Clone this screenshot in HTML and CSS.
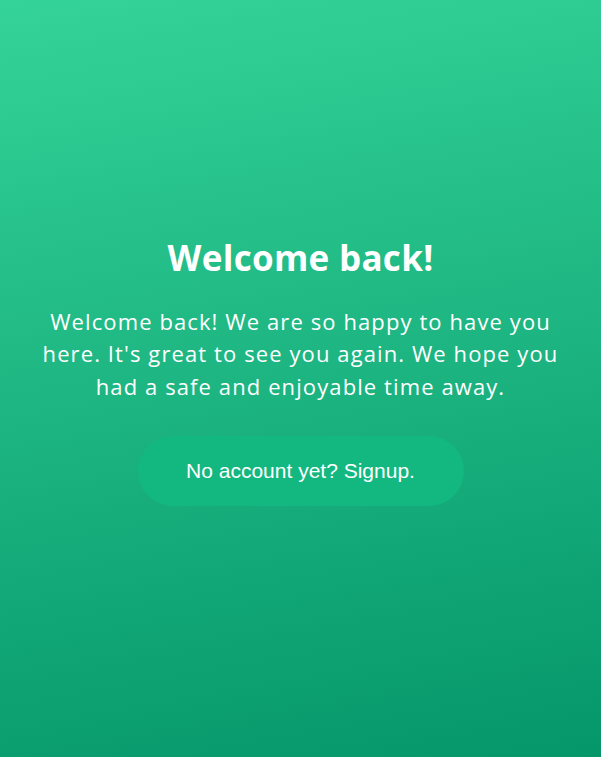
FILE: index.html
```html
<!DOCTYPE html>
<html lang="en">
<head>
<meta charset="utf-8">
<title>Welcome back</title>
<link rel="stylesheet" href="styles.css">
</head>
<body>
<main class="page">
  <section class="card">
    <h1 class="title">Welcome back!</h1>
    <p class="lead">Welcome back! We are so happy to have you here. It's great to see you again. We hope you had a safe and enjoyable time away.</p>
    <a class="signup" href="#">No account yet? Signup.</a>
  </section>
</main>
</body>
</html>
```

FILE: styles.css
```css
html, body {
  margin: 0;
  padding: 0;
}
body {
  background: linear-gradient(170deg, #34d399 0%, #059669 100%);
  min-height: 100vh;
  font-family: "Open Sans", "Noto Sans", sans-serif;
  color: #ffffff;
}
.page {
  min-height: 100vh;
  box-sizing: border-box;
  padding-bottom: 17px;
  display: flex;
  align-items: center;
  justify-content: center;
}
.card {
  width: 520px;
  display: flex;
  flex-direction: column;
  align-items: center;
  text-align: center;
}
.title {
  margin: 0;
  font-size: 35px;
  font-weight: 700;
  line-height: 48px;
  letter-spacing: 0.3px;
}
.lead {
  margin: 23px 0 0;
  font-size: 22px;
  line-height: 32.5px;
  letter-spacing: 1.1px;
}
.signup {
  margin-top: 34px;
  display: flex;
  align-items: center;
  justify-content: center;
  width: 326px;
  height: 70px;
  border-radius: 35px;
  background: #13b880;
  color: #ffffff;
  text-decoration: none;
  font-family: "Liberation Sans", Arial, sans-serif;
  font-size: 21px;
}
```
